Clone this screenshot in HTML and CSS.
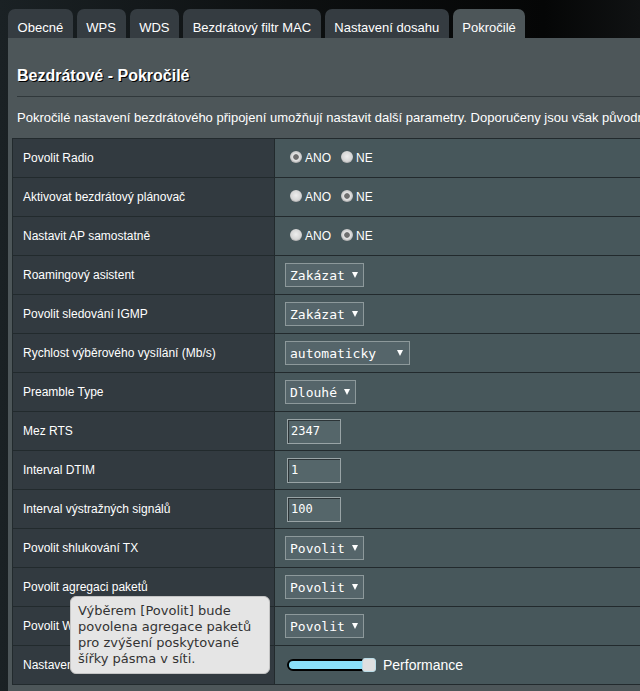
FILE: index.html
```html
<!DOCTYPE html>
<html lang="cs">
<head>
<meta charset="utf-8">
<title>Bezdrátové - Pokročilé</title>
<link rel="stylesheet" href="styles.css">
</head>
<body>
<div class="page">
  <nav class="tabs">
    <div class="tab">Obecné</div>
    <div class="tab">WPS</div>
    <div class="tab">WDS</div>
    <div class="tab">Bezdrátový filtr MAC</div>
    <div class="tab">Nastavení dosahu</div>
    <div class="tab active">Pokročilé</div>
  </nav>
  <section class="panel">
    <h1 class="title">Bezdrátové - Pokročilé</h1>
    <div class="rule"></div>
    <p class="desc">Pokročilé nastavení bezdrátového připojení umožňují nastavit další parametry. Doporučeny jsou však původní hodnoty.</p>
    <table class="settings">
      <tr>
        <th>Povolit Radio</th>
        <td><div class="radios"><label class="radio"><input type="radio" name="r1" checked>ANO</label><label class="radio"><input type="radio" name="r1">NE</label></div></td>
      </tr>
      <tr>
        <th>Aktivovat bezdrátový plánovač</th>
        <td><div class="radios"><label class="radio"><input type="radio" name="r2">ANO</label><label class="radio"><input type="radio" name="r2" checked>NE</label></div></td>
      </tr>
      <tr>
        <th>Nastavit AP samostatně</th>
        <td><div class="radios"><label class="radio"><input type="radio" name="r3">ANO</label><label class="radio"><input type="radio" name="r3" checked>NE</label></div></td>
      </tr>
      <tr>
        <th>Roamingový asistent</th>
        <td><div class="select">Zakázat<span class="arrow"></span></div></td>
      </tr>
      <tr>
        <th>Povolit sledování IGMP</th>
        <td><div class="select">Zakázat<span class="arrow"></span></div></td>
      </tr>
      <tr>
        <th>Rychlost výběrového vysílání (Mb/s)</th>
        <td><div class="select wide">automaticky<span class="arrow"></span></div></td>
      </tr>
      <tr>
        <th>Preamble Type</th>
        <td><div class="select">Dlouhé<span class="arrow"></span></div></td>
      </tr>
      <tr>
        <th>Mez RTS</th>
        <td><div class="field">2347</div></td>
      </tr>
      <tr>
        <th>Interval DTIM</th>
        <td><div class="field">1</div></td>
      </tr>
      <tr>
        <th>Interval výstražných signálů</th>
        <td><div class="field">100</div></td>
      </tr>
      <tr>
        <th>Povolit shlukování TX</th>
        <td><div class="select">Povolit<span class="arrow"></span></div></td>
      </tr>
      <tr>
        <th>Povolit agregaci paketů</th>
        <td><div class="select">Povolit<span class="arrow"></span></div></td>
      </tr>
      <tr>
        <th>Povolit WMM APSD</th>
        <td><div class="select">Povolit<span class="arrow"></span></div></td>
      </tr>
      <tr>
        <th>Nastavení výkonu TX</th>
        <td><div class="slider"><div class="track"></div><div class="thumb"></div><span class="slider-label">Performance</span></div></td>
      </tr>
    </table>
  </section>
  <div class="tooltip">Výběrem [Povolit] bude<br>povolena agregace paketů<br>pro zvýšení poskytované<br>šířky pásma v síti.</div>
</div>
</body>
</html>
```

FILE: styles.css
```css
html, body {
  margin: 0;
  padding: 0;
  overflow: hidden;
}

body {
  background: linear-gradient(to right, #1a2124 0, #0d1011 45%, #050606 85%, #101213 100%);
  font-family: "Liberation Sans", Arial, sans-serif;
  color: #fff;
}

.page {
  position: relative;
  width: 820px;
  padding: 9px 0 0 8px;
}

.tabs {
  display: flex;
  gap: 4px;
}

.tab {
  height: 29px;
  box-sizing: border-box;
  padding: 11px 9.6px 0;
  line-height: 16px;
  font-size: 13px;
  background: #353c41;
  border-radius: 7px 7px 0 0;
  color: #fff;
  white-space: nowrap;
}

.tab.active {
  background: #4d5659;
}

.panel {
  background: #4d5659;
  padding: 28px 0 20px 4px;
}

.title {
  margin: 0 0 10px 5px;
  font-size: 16px;
  line-height: 20px;
  font-weight: bold;
  color: #fff;
  text-shadow: 1px 1px 0 #000;
}

.rule {
  height: 1px;
  margin-left: 5px;
  background: #30383b;
}

.desc {
  margin: 13px 0 12px 5px;
  font-size: 13px;
  line-height: 16px;
  white-space: nowrap;
  color: #fff;
}

.settings {
  border-collapse: collapse;
  width: 780px;
  border: 1px solid #222a2d;
}

.settings th,
.settings td {
  height: 38px;
  padding: 0;
  border: 1px solid #222a2d;
  vertical-align: middle;
}

.settings th {
  width: 251px;
  padding-left: 10px;
  background: #323a40;
  text-align: left;
  font-weight: normal;
  font-size: 12px;
  color: #fff;
}

.settings td {
  padding-left: 10px;
  background: #47575b;
}

.radios {
  display: flex;
  align-items: center;
  font-size: 12px;
  line-height: 14px;
}

.radio {
  display: flex;
  align-items: center;
  margin-right: 5px;
}

.radio input {
  appearance: none;
  -webkit-appearance: none;
  width: 12px;
  height: 12px;
  margin: 0 3px 2px 5px;
  border-radius: 50%;
  background: radial-gradient(circle at 50% 45%, #eeeeee 0, #d6d6d6 55%, #bcbcbc 100%);
  box-shadow: inset 0 -1px 0 rgba(0, 0, 0, 0.12);
}

.radio input:checked {
  background: radial-gradient(circle at 50% 50%, #6e6e6e 0, #6e6e6e 2.4px, #e6e6e6 3.2px, #cfcfcf 5px, #b8b8b8 100%);
}

.select {
  display: inline-flex;
  align-items: center;
  height: 24px;
  box-sizing: border-box;
  border: 1px solid #8d999b;
  background: #55656a;
  padding: 0 5px 0 4px;
  font-family: "DejaVu Sans Mono", "Liberation Mono", monospace;
  font-size: 13px;
  color: #fff;
  vertical-align: middle;
}

.select.wide {
  width: 125px;
  padding-right: 6px;
}

.select .arrow {
  width: 0;
  height: 0;
  margin-left: 7px;
  border-left: 3px solid transparent;
  border-right: 3px solid transparent;
  border-top: 6px solid #fff;
}

.select.wide .arrow {
  margin-left: auto;
}

.field {
  display: flex;
  align-items: center;
  width: 54px;
  height: 25px;
  box-sizing: border-box;
  margin-left: 2px;
  padding-left: 3px;
  border: 1px solid #99a4a6;
  box-shadow: inset 1px 1px 0 #2c3437;
  background: #55666a;
  font-family: "DejaVu Sans Mono", "Liberation Mono", monospace;
  font-size: 12px;
  color: #fff;
}

.slider {
  display: flex;
  align-items: center;
  margin-left: 2px;
}

.track {
  width: 88px;
  height: 12px;
  box-sizing: border-box;
  border: 2px solid #000;
  border-radius: 6px;
  background: #8adff8;
}

.thumb {
  width: 14px;
  height: 14px;
  box-sizing: border-box;
  margin-left: -13px;
  border: 1px solid #b9dbe6;
  border-radius: 3px;
  background: #dedfe0;
}

.slider-label {
  margin-left: 7px;
  font-size: 14px;
  color: #fff;
}

.tooltip {
  position: absolute;
  left: 70px;
  top: 596px;
  width: 200px;
  height: 78px;
  box-sizing: border-box;
  padding: 6px 6px 0 7px;
  background: #e5e5e5;
  border: 1px solid #c4c4c4;
  border-radius: 6px;
  font-family: Verdana, "DejaVu Sans", sans-serif;
  font-size: 13px;
  line-height: 16px;
  color: #333;
}
```
